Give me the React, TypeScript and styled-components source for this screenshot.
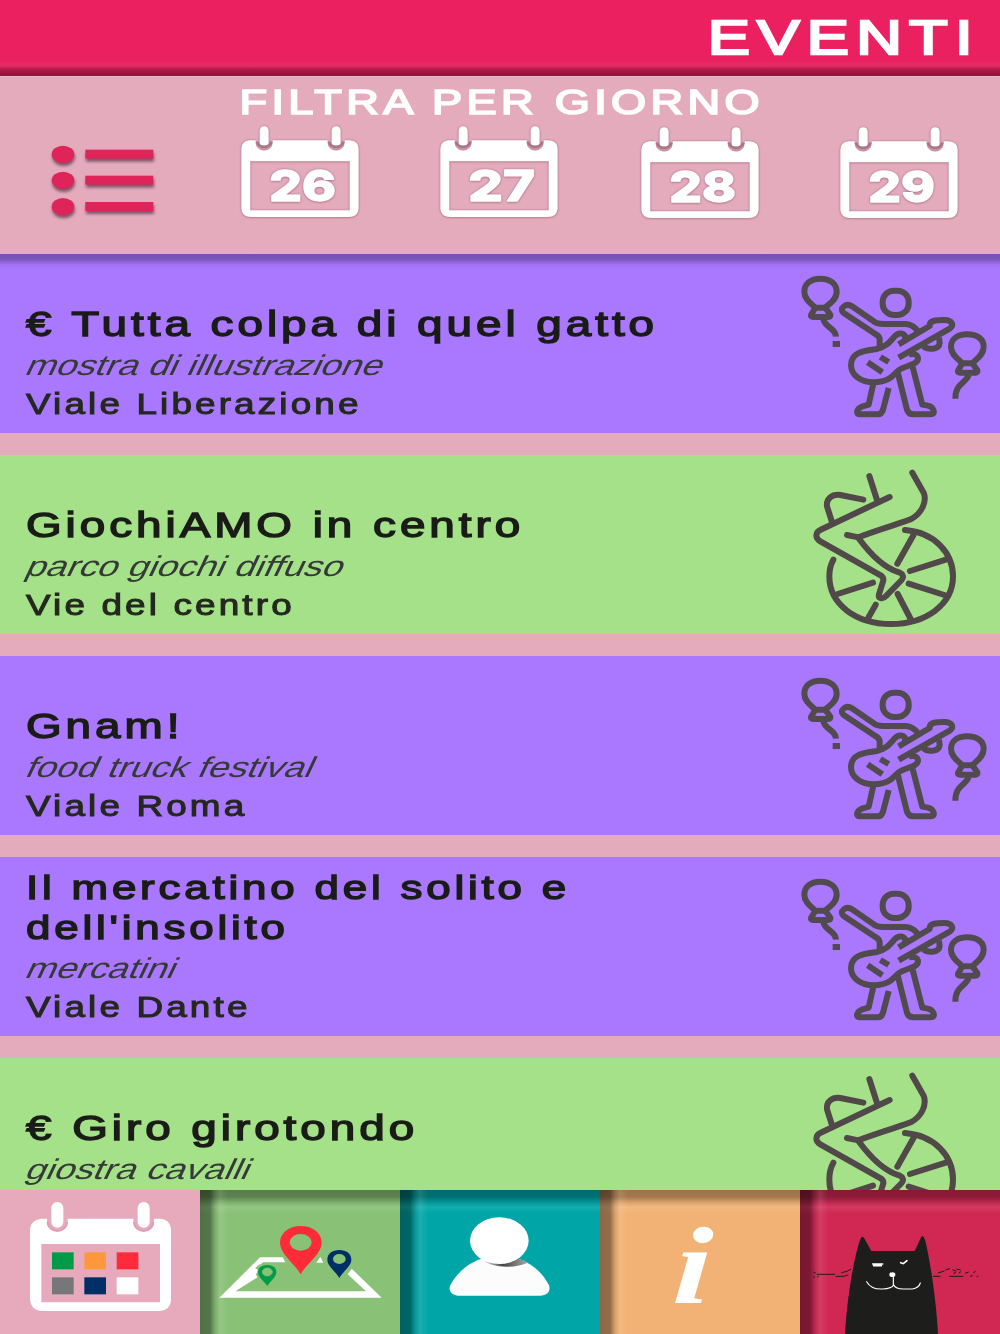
import React from "react";
import styled, { createGlobalStyle, css } from "styled-components";

const STRETCH = 1.29;

const GlobalStyle = createGlobalStyle`
  body { margin: 0; background: #e4abbd; }
  * { box-sizing: border-box; }
  svg { display: block; }
`;

const Screen = styled.div`
  width: 1000px;
  height: 1334px;
  display: flex;
  flex-direction: column;
  overflow: hidden;
  background: #e4abbd;
  font-family: "Liberation Sans", Arial, sans-serif;
`;

const Header = styled.header`
  flex: none;
  height: 76px;
  padding: 9px 20.5px 0 0;
  display: flex;
  justify-content: flex-end;
  background: linear-gradient(#ea2060 0 60px, #e32d66 66px, #b51c4c 69px, #9a153f 73px, #98103b 76px);
`;

const HeaderTitle = styled.h1`
  margin: 0;
  font-size: 49px;
  line-height: 56px;
  font-weight: 400;
  letter-spacing: 0.115em;
  color: #fff;
  -webkit-text-stroke: 2.4px #fff;
  transform: scaleX(${STRETCH});
  transform-origin: right;
`;

const Filter = styled.section`
  flex: none;
  height: 178px;
  padding-top: 7px;
  border-top: 1px solid #ebb9ca;
  border-bottom: 1px solid #e9afb9;
  display: flex;
  flex-direction: column;
  align-items: center;
`;

const FilterTitle = styled.h2`
  margin: 0;
  padding-left: 3px;
  font-size: 35px;
  line-height: 36px;
  font-weight: 400;
  letter-spacing: 0.096em;
  white-space: nowrap;
  color: #fff;
  -webkit-text-stroke: 1.7px #fff;
  transform: scaleX(${STRETCH});
`;

const Days = styled.div`
  width: 100%;
  padding-top: 1px;
  display: grid;
  grid-template-columns: repeat(5, 200px);
  justify-items: center;
  align-items: start;
`;

const DayButton = styled.button<{ $inset?: number; $drop?: number }>`
  border: 0;
  background: none;
  padding: ${(p) => p.$drop ?? 0}px ${(p) => p.$inset ?? 0}px 0 0;
`;

const List = styled.main`
  flex: 1;
  min-height: 0;
  overflow: hidden;
  display: flex;
  flex-direction: column;
  gap: 22px;
`;

const Row = styled.article<{ $tone: "purple" | "green"; $shaded?: boolean }>`
  flex: none;
  height: 179px;
  padding: 0 0 10px 25.5px;
  display: flex;
  justify-content: space-between;
  align-items: flex-end;
  background-color: ${(p) => (p.$tone === "purple" ? "#aa78ff" : "#a5e188")};
  ${(p) =>
    p.$shaded &&
    css`
      background-image: linear-gradient(rgba(20, 15, 40, 0.36), rgba(20, 15, 40, 0.32) 5px, rgba(20, 15, 40, 0.05) 11px, transparent 16px);
    `}
`;

const RowText = styled.div`
  width: 520px;
  transform: scaleX(${STRETCH});
  transform-origin: left;
`;

const Title = styled.h3<{ $compact: boolean }>`
  margin: 0 0 2px;
  font-size: ${(p) => (p.$compact ? 34 : 35.5)}px;
  line-height: 39.5px;
  font-weight: 400;
  letter-spacing: 0.087em;
  color: #1a1c18;
  -webkit-text-stroke: 1.4px #1a1c18;
`;

const Kind = styled.p`
  margin: 0 0 0 -2.3px;
  width: max-content;
  font-size: 28.6px;
  line-height: 38.5px;
  color: #353a38;
  transform: skewX(-20deg);
  transform-origin: 0 29px;
`;

const Place = styled.p`
  margin: 0;
  font-size: 28.6px;
  line-height: 38.5px;
  letter-spacing: 0.085em;
  color: #24291f;
  -webkit-text-stroke: 1px #24291f;
`;

const RowIcon = styled.svg`
  flex: none;
  width: 220px;
  height: 179px;
  margin-bottom: -10px;
  fill: none;
`;

const Nav = styled.nav`
  flex: none;
  height: 144px;
  display: grid;
  grid-template-columns: repeat(5, 1fr);
`;

const Tab = styled.a<{ $color: string; $active?: boolean }>`
  background-color: ${(p) => p.$color};
  ${(p) =>
    !p.$active &&
    css`
      background-image: linear-gradient(90deg, rgba(0, 0, 0, 0.42), rgba(0, 0, 0, 0.39) 10px, rgba(50, 50, 50, 0.15) 15px, rgba(255, 255, 255, 0.1) 20px, transparent 28px),
        linear-gradient(rgba(0, 0, 0, 0.36), rgba(0, 0, 0, 0.32) 7px, rgba(50, 50, 50, 0.1) 13px, rgba(255, 255, 255, 0.08) 17px, transparent 24px);
    `}
`;

const TabIcon = styled.svg`
  width: 200px;
  height: 144px;
`;

const Bullets = styled.g`
  fill: #de2458;
  filter: drop-shadow(2px 9px 4px rgba(70, 40, 60, 0.65));
`;

const Raised = styled.g`
  filter: drop-shadow(0 1px 3px rgba(110, 50, 75, 0.65));
`;

function ListIcon() {
  return (
    <svg width="133.3" height="103" viewBox="100 184 400 309">
      <Bullets>
        {[284, 362, 441].map((y) => (
          <React.Fragment key={y}>
            <ellipse cx="190" cy={y} rx="34" ry="26" />
            <rect x="257" y={y - 14} width="204" height="27" />
          </React.Fragment>
        ))}
      </Bullets>
    </svg>
  );
}

function DayIcon({ day }: { day: number }) {
  return (
    <svg width="133.3" height="103" viewBox="700 182 400 309">
      <Raised>
        <path
          fill="#fff"
          fillRule="evenodd"
          d="M750 240H768V247A25 23 0 0 0 819 247V240H984V247A25 23 0 0 0 1035 247V240H1050Q1077 242 1077 265V445Q1075 470 1048 470H754Q727 470 725 445V265Q726 242 750 240ZM752 303V450H1050V303Z"
        />
        <rect x="780" y="198" width="27" height="66" rx="13" fill="#fff" />
        <rect x="996" y="198" width="27" height="66" rx="13" fill="#fff" />
      </Raised>
      <path d="M772 244A22 20 0 0 0 815 244M988 244A22 20 0 0 0 1031 244" fill="none" stroke="#a87587" strokeWidth="8" />
      <Raised>
        <text
          transform="translate(909 422) scale(1.13 1)"
          textAnchor="middle"
          fontFamily="Inter, sans-serif"
          fontWeight="800"
          fontSize="127"
          textLength="177"
          lengthAdjust="spacingAndGlyphs"
          fill="#fff"
          stroke="#fff"
          strokeWidth="4"
          strokeLinejoin="round"
        >
          {day}
        </text>
      </Raised>
    </svg>
  );
}

function GuitarIcon() {
  return (
    <RowIcon viewBox="0 -18 660 537" preserveAspectRatio="none" stroke="#514b50" strokeWidth="18" strokeLinejoin="round">
      <path d="M121 56C91 56 73 72 73 95C73 120 96 132 106 143H136C147 132 170 120 170 95C170 72 151 56 121 56Z" />
      <path d="M106 143L93 165Q92 171 99 171H145Q153 171 151 164L136 143" />
      <path d="M130 177C134 203 167 203 168 230M158 252H180" />
      <path d="M562 223C531 223 513 238 513 260C513 286 536 297 547 310H577C588 297 611 286 611 260C611 238 592 223 562 223Z" />
      <path d="M547 310L534 332Q533 338 540 338H586Q594 338 592 331L577 310" />
      <path d="M566 345C556 372 526 370 526 416" />
      <rect x="308" y="92" width="78" height="73" rx="34" />
      <path d="M299 262V238Q298 228 286 222L190 158C176 146 198 127 216 139L280 183Q290 192 310 192H378Q398 194 411 210L417 218" />
      <path d="M356 253L449 198C447 179 475 180 494 180C515 180 525 196 509 206L356 293" />
      <path d="M388 232L375 237C379 216 354 217 344 229C329 246 317 262 290 267C258 272 213 274 213 315C213 345 242 367 282 367C331 366 338 345 357 330C375 316 413 316 414 296C414 284 404 280 387 283" />
      <path d="M430 259C443 270 477 270 479 249L477 233" />
      <path d="M263 307L307 337M301 291L326 306" />
      <path d="M280 371L266 434L245 440C231 446 224 463 241 463H294Q305 463 309 449L326 384" />
      <path d="M353 337L381 449Q385 463 400 463H452C471 463 459 439 444 437L427 434L398 321" />
    </RowIcon>
  );
}

function CycleIcon() {
  return (
    <RowIcon viewBox="-30 13 660 537" preserveAspectRatio="none" stroke="#514849" strokeWidth="18" strokeLinecap="round" strokeLinejoin="round">
      <path d="M238 76L262 151M299 139L92 237C76 244 74 262 91 272L272 374Q281 379 280 389L267 431C264 443 278 447 287 437L335 388C343 378 338 370 327 365C278 350 238 306 207 264" />
      <path d="M125 211L111 167C108 145 125 130 151 133L220 147" />
      <path d="M367 66L401 126C411 151 397 188 362 206C345 214 270 235 205 260L171 253" />
      <path d="M345 238C434 245 489 307 489 377C489 462 407 520 303 520C199 520 118 462 118 377Q118 348 130 327" />
      <path d="M371 252L322 339M470 326L360 361M356 399L463 433M323 430L362 505M257 462L235 501M249 396L143 430" />
    </RowIcon>
  );
}

function CalendarTabIcon() {
  const cells = ["#009b48", "#ff983d", "#ff2b39", "#777779", "#002f67", "#fff"];
  return (
    <TabIcon viewBox="0 30 600 432">
      <path
        fill="#fff"
        fillRule="evenodd"
        d="M122 116H141V124A31 29 0 0 0 203 124V116H400V124A31 29 0 0 0 462 124V116H480Q509 118 513 145V362Q510 390 480 393H122Q93 389 90 360V146Q94 120 122 116ZM124 192V367H480V192Z"
      />
      <path d="M143 126A29 27 0 0 0 201 126M402 126A29 27 0 0 0 460 126" fill="none" stroke="#dd9fb4" strokeWidth="6" />
      <rect x="154" y="66" width="36" height="77" rx="18" fill="#fff" />
      <rect x="413" y="66" width="36" height="77" rx="18" fill="#fff" />
      {cells.map((c, i) => (
        <rect key={i} x={156 + (i % 3) * 97} y={i < 3 ? 217 : 292} width="65" height="51" fill={c} />
      ))}
    </TabIcon>
  );
}

function MapTabIcon() {
  return (
    <TabIcon viewBox="600 30 600 432">
      <path fill="#fff" d="M780 232H848L856 247H789L765 271L774 291L706 334H1098L1043 283L1055 266L1145 353H658ZM949 248L961 230L970 248Z" />
      <path fill="#89c177" d="M762 272Q770 250 802 248Q836 252 836 280Q826 305 802 326L775 298Z" />
      <path fill="#fff" d="M706 334L779 272L764 264L690 334Z" />
      <path fill="#ff2b39" fillRule="evenodd" d="M902 283C886 252 840 222 840 188C840 159 866 138 902 138C939 138 965 159 965 188C965 222 918 252 902 283ZM902 162A33 25 0 1 0 902 212A33 25 0 1 0 902 162Z" />
      <path fill="#002f67" fillRule="evenodd" d="M1018 294C1008 275 982 259 982 239C982 221 997 210 1018 210C1039 210 1054 221 1054 239C1054 259 1028 275 1018 294ZM1018 222A19 15 0 1 0 1018 252A19 15 0 1 0 1018 222Z" />
      <path fill="#009b48" stroke="#89c177" strokeWidth="2" fillRule="evenodd" d="M802 319C792 304 773 292 773 277C773 263 785 254 802 254C819 254 830 263 830 277C830 292 811 304 802 319ZM802 264A15 12 0 1 0 802 288A15 12 0 1 0 802 264Z" />
    </TabIcon>
  );
}

function UserTabIcon() {
  return (
    <TabIcon viewBox="0 30 600 432">
      <defs>
        <linearGradient id="neck" x1="0" x2="1">
          <stop offset="0" stopColor="#fafafa" />
          <stop offset=".45" stopColor="#444" />
          <stop offset="1" stopColor="#aaa" />
        </linearGradient>
      </defs>
      <path fill="#fcfcfc" d="M245 236C199 250 168 284 150 317C145 335 158 347 180 347H420C442 347 453 333 447 316C430 283 403 254 358 237Z" />
      <path fill="url(#neck)" d="M245 238C280 268 350 264 384 248Q371 240 357 237Z" />
      <ellipse cx="298" cy="182" rx="88" ry="70" fill="#fff" />
    </TabIcon>
  );
}

function InfoTabIcon() {
  return (
    <TabIcon viewBox="600 30 600 432">
      <text
        transform="translate(815 370) skewX(-4) scale(1.22 1)"
        fontFamily="'Liberation Serif', serif"
        fontStyle="italic"
        fontWeight="700"
        fontSize="330"
        fill="#fff"
      >
        i
      </text>
    </TabIcon>
  );
}

function CatTabIcon() {
  return (
    <TabIcon viewBox="60 30 600 432" fill="none">
      <path fill="#1d1e1b" d="M195 462C200 370 218 245 240 180Q248 160 256 181L274 213H404L420 179Q427 157 435 179C449 230 470 370 474 462Z" />
      <g stroke="#1d1e1b" strokeWidth="3">
        <path d="M100 276L107 279M110 283H165M99 292L104 290M112 291L117 288M167 289H189L205 285M184 278L201 274L213 267M459 289H481M474 279L493 273M496 270L510 266M517 269L529 274M529 267L542 270M508 289H550M520 280L528 278M536 279L543 275M555 280L566 276M570 289L578 287M580 278L587 274M590 290L595 288" />
      </g>
      <g stroke="#fff" strokeLinecap="round">
        <path strokeWidth="5" d="M278 252H308M281 257H304M362 248L370 251L381 242" />
        <path strokeWidth="3.5" d="M260 305C270 323 288 328 308 327Q335 326 341 315Q347 327 370 327H397Q416 324 421 309M340 292V314" />
      </g>
      <ellipse cx="337" cy="284" rx="9" ry="7" fill="#fff" />
    </TabIcon>
  );
}

type EventItem = { title: string; kind: string; place: string; tone: "purple" | "green" };

const events: EventItem[] = [
  { title: "€ Tutta colpa di quel gatto", kind: "mostra di illustrazione", place: "Viale Liberazione", tone: "purple" },
  { title: "GiochiAMO in centro", kind: "parco giochi diffuso", place: "Vie del centro", tone: "green" },
  { title: "Gnam!", kind: "food truck festival", place: "Viale Roma", tone: "purple" },
  { title: "Il mercatino del solito e dell'insolito", kind: "mercatini", place: "Viale Dante", tone: "purple" },
  { title: "€ Giro girotondo", kind: "giostra cavalli", place: "", tone: "green" },
];

export default function App() {
  return (
    <>
      <GlobalStyle />
      <Screen>
        <Header>
          <HeaderTitle>EVENTI</HeaderTitle>
        </Header>
        <Filter>
          <FilterTitle>FILTRA PER GIORNO</FilterTitle>
          <Days>
            <DayButton><ListIcon /></DayButton>
            <DayButton><DayIcon day={26} /></DayButton>
            <DayButton $inset={2}><DayIcon day={27} /></DayButton>
            <DayButton $drop={1}><DayIcon day={28} /></DayButton>
            <DayButton $inset={2} $drop={1}><DayIcon day={29} /></DayButton>
          </Days>
        </Filter>
        <List>
          {events.map((e, i) => (
            <Row key={e.title} $tone={e.tone} $shaded={i === 0}>
              <RowText>
                <Title $compact={e.title.length > 30}>{e.title}</Title>
                <Kind>{e.kind}</Kind>
                <Place>{e.place || "\u00a0"}</Place>
              </RowText>
              {e.tone === "purple" ? <GuitarIcon /> : <CycleIcon />}
            </Row>
          ))}
        </List>
        <Nav>
          <Tab $color="#e7aabc" $active><CalendarTabIcon /></Tab>
          <Tab $color="#89c177"><MapTabIcon /></Tab>
          <Tab $color="#00a6a7"><UserTabIcon /></Tab>
          <Tab $color="#f2b275"><InfoTabIcon /></Tab>
          <Tab $color="#d02853"><CatTabIcon /></Tab>
        </Nav>
      </Screen>
    </>
  );
}
